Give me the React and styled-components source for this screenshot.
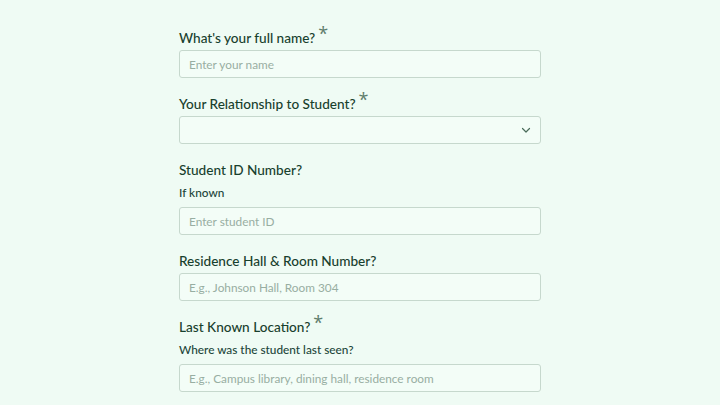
import React from "react";
import styled, { createGlobalStyle } from "styled-components";

const colors = {
  page: "#effbf4",
  field: "#f3fdf7",
  border: "#c6d8cd",
  label: "#18402d",
  helper: "#22463a",
  star: "#5e7d6c",
  placeholder: "#98aea2",
};

const GlobalStyle = createGlobalStyle`
  html, body {
    margin: 0;
    background: ${colors.page};
    font-family: Lato, "Open Sans", sans-serif;
  }
`;

const Page = styled.div`
  min-height: 405px;
  display: flex;
  justify-content: center;
  padding-top: 28px;
  box-sizing: border-box;
`;

const Form = styled.form`
  width: 362px;
  display: flex;
  flex-direction: column;
  gap: 16px;
`;

const Field = styled.div`
  display: flex;
  flex-direction: column;
`;

const Label = styled.label`
  font-size: 13.6px;
  line-height: 20px;
  font-weight: 500;
  color: ${colors.label};
  margin-bottom: ${({ $hasHelp }) => ($hasHelp ? "4px" : "2px")};
`;

const Star = styled.span`
  font-family: "Open Sans", sans-serif;
  color: ${colors.star};
  font-size: 18px;
  font-weight: 400;
  position: relative;
  top: -3px;
  margin-left: 3px;
  line-height: 0;
`;

const Help = styled.div`
  font-size: 11.8px;
  line-height: 18px;
  font-weight: 500;
  color: ${colors.helper};
  margin-bottom: 5px;
`;

const Input = styled.input`
  box-sizing: border-box;
  height: 28px;
  width: 100%;
  border: 1px solid ${colors.border};
  border-radius: 3px;
  background: ${colors.field};
  padding: 0 9px;
  font-family: inherit;
  font-size: 11.8px;
  color: ${colors.label};
  outline: none;

  &::placeholder {
    color: ${colors.placeholder};
  }
`;

const SelectBox = styled.div`
  box-sizing: border-box;
  height: 28px;
  border: 1px solid ${colors.border};
  border-radius: 3px;
  background: ${colors.field};
  display: flex;
  align-items: center;
  justify-content: flex-end;
  padding-right: 8px;
  color: #4a6b5a;
`;

const Chevron = () => (
  <svg width="12" height="12" viewBox="0 0 24 24" fill="none" stroke="currentColor" strokeWidth="2.4" strokeLinecap="round" strokeLinejoin="round">
    <path d="M5 9l7 7 7-7" />
  </svg>
);

const fields = [
  { label: "What's your full name?", required: true, placeholder: "Enter your name" },
  { label: "Your Relationship to Student?", required: true, select: true },
  { label: "Student ID Number?", help: "If known", placeholder: "Enter student ID" },
  { label: "Residence Hall & Room Number?", placeholder: "E.g., Johnson Hall, Room 304" },
  {
    label: "Last Known Location?",
    required: true,
    help: "Where was the student last seen?",
    placeholder: "E.g., Campus library, dining hall, residence room",
  },
];

export default function App() {
  return (
    <>
      <GlobalStyle />
      <Page>
        <Form onSubmit={(e) => e.preventDefault()}>
          {fields.map((f) => (
            <Field key={f.label}>
              <Label $hasHelp={!!f.help}>
                {f.label}
                {f.required && <Star>*</Star>}
              </Label>
              {f.help && <Help>{f.help}</Help>}
              {f.select ? (
                <SelectBox>
                  <Chevron />
                </SelectBox>
              ) : (
                <Input placeholder={f.placeholder} />
              )}
            </Field>
          ))}
        </Form>
      </Page>
    </>
  );
}
